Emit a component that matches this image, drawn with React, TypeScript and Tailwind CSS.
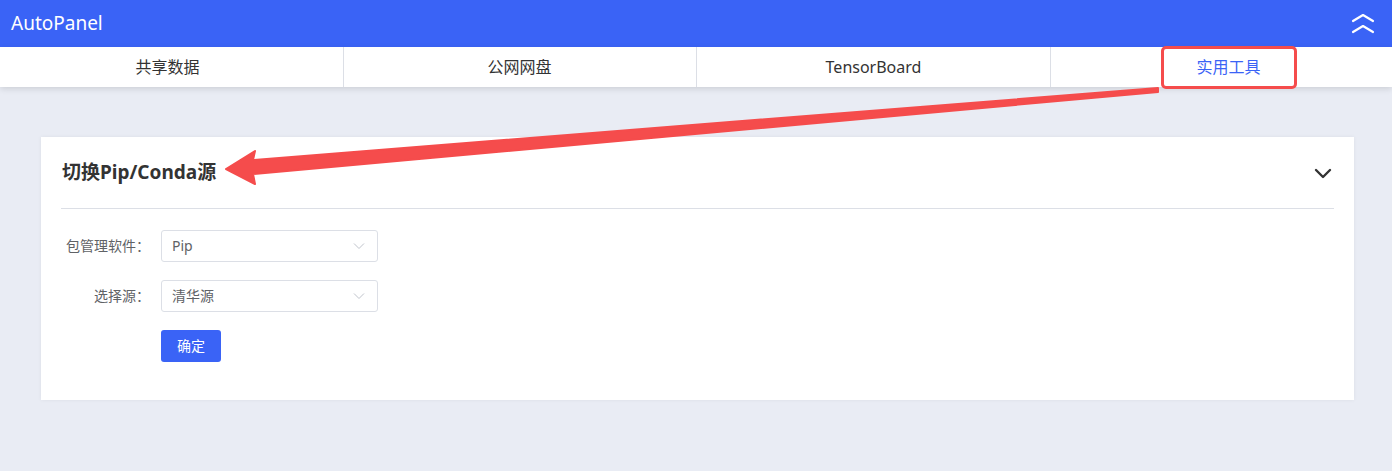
import React from "react";

const TABS = [
  { label: "共享数据", width: "w-[344px]" },
  { label: "公网网盘", width: "w-[353px]" },
  { label: "TensorBoard", width: "w-[354px]" },
  { label: "实用工具", width: "flex-1" },
];

const FONT = { fontFamily: '"Noto Sans", "Noto Sans CJK SC", sans-serif' };

function SelectBox({ value }: { value: string }) {
  return (
    <div className="flex h-8 w-[217px] items-center justify-between rounded-[3px] border border-[#dcdfe6] bg-white pl-[10px] pr-[12px] text-sm text-[#606266]">
      <span>{value}</span>
      <svg width="12" height="8" viewBox="0 0 12 8" fill="none" stroke="#c0c4cc" strokeWidth="1" aria-hidden>
        <polyline points="1 1.5 6 6.5 11 1.5" />
      </svg>
    </div>
  );
}

export default function App() {
  return (
    <div className="relative min-h-[471px] w-full bg-[#e9ecf4]" style={FONT}>
      {/* Header */}
      <div className="flex h-[47px] items-center justify-between bg-[#3a63f6] pl-[11px] pr-[17px]">
        <span className="text-[19px] text-white">AutoPanel</span>
        <svg width="24" height="22" viewBox="0 0 24 22" fill="none" stroke="white" strokeWidth="2.2" strokeLinecap="round" strokeLinejoin="round" aria-hidden>
          <polyline points="2 8 12 2 22 8" />
          <polyline points="2 19 12 13 22 19" />
        </svg>
      </div>

      {/* Tabs */}
      <div className="flex h-10 bg-white shadow-[0_2px_6px_rgba(0,0,0,0.12)]">
        {TABS.map((tab, i) => (
          <div
            key={tab.label}
            className={`flex ${tab.width} items-center justify-center text-[16px] ${i < 3 ? "border-r border-[#dcdfe6]" : ""} ${i === 3 ? "pl-[14px] text-[#3a63f6]" : "text-[#333]"} ${i === 0 ? "pr-[8px]" : ""} ${i === 1 ? "pr-px" : ""}`}
          >
            {tab.label}
          </div>
        ))}
      </div>

      {/* Card */}
      <div className="ml-[41px] mr-[38px] mt-[50px] bg-white px-5 pb-[38px] shadow-[0_0_4px_rgba(0,0,0,0.06)]">
        <div className="flex h-[72px] items-center justify-between border-b border-[#dcdfe6] pl-px">
          <h2 className="text-[19px] font-bold text-[#333]">切换Pip/Conda源</h2>
          <svg width="20" height="20" viewBox="0 0 20 20" fill="none" stroke="#333" strokeWidth="2.4" strokeLinecap="round" strokeLinejoin="round" className="mr-[1px]" aria-hidden>
            <polyline points="3 7 10 14 17 7" />
          </svg>
        </div>

        <div className="flex flex-col gap-[18px] pt-[21px]">
          <div className="flex items-center">
            <label className="w-[100px] pr-[11px] text-right text-sm text-[#606266]">包管理软件：</label>
            <SelectBox value="Pip" />
          </div>
          <div className="flex items-center">
            <label className="w-[100px] pr-[11px] text-right text-sm text-[#606266]">选择源：</label>
            <SelectBox value="清华源" />
          </div>
          <div className="flex items-center">
            <div className="w-[100px]" />
            <button className="h-8 w-[60px] rounded-[3px] bg-[#3a63f6] text-sm text-white">确定</button>
          </div>
        </div>
      </div>

      {/* Annotation overlay */}
      <div className="absolute left-[1161px] top-[46px] h-[43px] w-[136px] rounded-[5px] border-[3px] border-[#f54c4c]" />
      <svg className="pointer-events-none absolute left-0 top-0" width="1392" height="471" aria-hidden>
        <polygon
          points="1158,88 253,160 255,151 226,169 255,184 253,174 1158,92"
          fill="#f54c4c"
          stroke="#f54c4c"
          strokeWidth="2"
          strokeLinejoin="round"
        />
      </svg>
    </div>
  );
}
